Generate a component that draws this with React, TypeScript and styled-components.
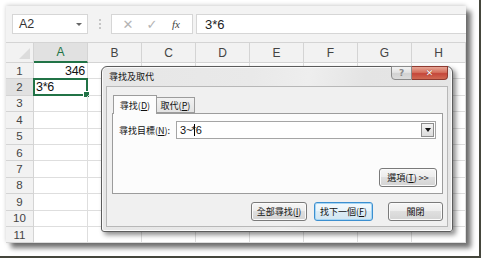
import React from "react";
import styled, { createGlobalStyle } from "styled-components";

const GlobalStyle = createGlobalStyle`
  body {
    margin: 0;
    background: #fff;
    font-family: "Liberation Sans", Arial, sans-serif;
  }
`;

const cjk = `"Noto Sans CJK TC", "Liberation Sans", sans-serif`;

const Page = styled.div`
  width: 484px;
  height: 260px;
  background: #fff;
  overflow: hidden;
`;

const Outer = styled.div`
  box-sizing: border-box;
  width: 481px;
  height: 258px;
  padding: 6px 0 0 6px;
  border-right: 2px solid #45463c;
  border-bottom: 2px solid #45463c;
`;

const Frame = styled.div`
  position: relative;
  width: 460px;
  height: 237px;
  background: #f3f3f3;
  box-shadow: 0 -1px 4px rgba(0, 0, 0, 0.18), 5px 5px 5px rgba(0, 0, 0, 0.55);
  overflow: visible;
`;

const FormulaBar = styled.div`
  display: flex;
  align-items: center;
  height: 36px;
  padding-left: 6px;
`;

const NameBox = styled.div`
  box-sizing: border-box;
  width: 76px;
  height: 20px;
  background: #fff;
  border: 1px solid #d6d6d6;
  display: flex;
  align-items: center;
  justify-content: space-between;
  padding: 0 5px 0 6px;
  font-size: 12.5px;
  color: #333;
`;

const SmallArrow = styled.span`
  width: 0;
  height: 0;
  border-left: 3px solid transparent;
  border-right: 3px solid transparent;
  border-top: 3px solid #666;
`;

const Dots = styled.div`
  width: 23px;
  display: flex;
  flex-direction: column;
  align-items: center;
  gap: 2px;
  span {
    width: 2px;
    height: 2px;
    background: #c6c6c6;
  }
`;

const FxBox = styled.div`
  box-sizing: border-box;
  width: 82px;
  height: 20px;
  margin-right: 3px;
  background: #fff;
  border: 1px solid #d6d6d6;
  display: flex;
  align-items: center;
  justify-content: space-around;
  padding: 0 4px;
`;

const FxIcon = styled.span<{ $dark?: boolean }>`
  width: 22px;
  text-align: center;
  font-size: ${(p) => (p.$dark ? "11px" : "13px")};
  font-family: ${(p) => (p.$dark ? `"Liberation Serif", serif` : `"DejaVu Sans", sans-serif`)};
  font-style: ${(p) => (p.$dark ? "italic" : "normal")};
  color: ${(p) => (p.$dark ? "#444" : "#b4b4b4")};
`;

const FormulaInput = styled.div`
  flex: 1;
  height: 20px;
  box-sizing: border-box;
  background: #fff;
  border: 1px solid #d6d6d6;
  border-right: none;
  display: flex;
  align-items: center;
  padding-left: 8px;
  font-size: 13px;
  color: #222;
`;

const Sheet = styled.div`
  display: grid;
  grid-template-columns: 28px repeat(8, 54px);
  grid-template-rows: 20px repeat(11, 16.4px);
  background: #fff;
  border-top: 1px solid #d4d4d4;
`;

const Corner = styled.div`
  position: relative;
  background: #f2f2f2;
  border-right: 1px solid #d4d4d4;
  border-bottom: 1px solid #d4d4d4;
  &::after {
    content: "";
    position: absolute;
    right: 3px;
    bottom: 3px;
    border-left: 11px solid transparent;
    border-bottom: 11px solid #dcdcdc;
  }
`;

const ColHead = styled.div<{ $active?: boolean }>`
  box-sizing: border-box;
  display: flex;
  align-items: center;
  justify-content: center;
  font-size: 12px;
  background: ${(p) => (p.$active ? "#e1e1e1" : "#f2f2f2")};
  color: ${(p) => (p.$active ? "#217346" : "#444")};
  border-right: 1px solid #d4d4d4;
  border-bottom: ${(p) => (p.$active ? "2px solid #217346" : "1px solid #d4d4d4")};
`;

const RowHead = styled.div<{ $active?: boolean }>`
  box-sizing: border-box;
  display: flex;
  align-items: center;
  justify-content: center;
  font-size: 11.5px;
  background: ${(p) => (p.$active ? "#e1e1e1" : "#f2f2f2")};
  color: #444;
  border-right: 1px solid #d4d4d4;
  border-bottom: 1px solid #d4d4d4;
`;

const Cell = styled.div<{ $right?: boolean; $selected?: boolean }>`
  position: relative;
  box-sizing: border-box;
  display: flex;
  align-items: center;
  justify-content: ${(p) => (p.$right ? "flex-end" : "flex-start")};
  padding: 0 2px;
  font-size: 12.5px;
  letter-spacing: -0.3px;
  color: #111;
  border-right: 1px solid #dedede;
  border-bottom: 1px solid #dedede;
  ${(p) =>
    p.$selected &&
    `
    &::before {
      content: "";
      position: absolute;
      left: -1px;
      top: -1px;
      right: -1px;
      bottom: -1px;
      border: 2px solid #217346;
    }
    &::after {
      content: "";
      position: absolute;
      right: -3px;
      bottom: -3px;
      width: 5px;
      height: 5px;
      background: #217346;
      border: 1px solid #fff;
    }
  `}
`;

/* ---------- dialog ---------- */

const Dialog = styled.div`
  position: absolute;
  left: 95px;
  top: 60px;
  box-sizing: border-box;
  width: 352px;
  height: 166px;
  padding: 0 4px 4px 4px;
  border: 1px solid #5c5c5c;
  border-radius: 6px 6px 3px 3px;
  background: linear-gradient(100deg, #e6e6e6 0%, #e9e9e9 40%, #eeeeee 55%, #e4e4e4 70%, #e6e6e6 100%);
  box-shadow: inset 0 0 0 1px #fafafa, 3px 3px 5px rgba(0, 0, 0, 0.45);
  font-family: ${cjk};
`;

const TitleBar = styled.div`
  display: flex;
  justify-content: space-between;
  height: 19px;
`;

const Title = styled.span`
  font-size: 9px;
  color: #111;
  line-height: 19px;
  padding-left: 3px;
`;

const Caption = styled.div`
  display: flex;
  align-self: flex-start;
  margin-top: -1px;
`;

const CapBtn = styled.div<{ $close?: boolean }>`
  box-sizing: border-box;
  width: ${(p) => (p.$close ? "36px" : "21px")};
  height: 14px;
  display: flex;
  align-items: center;
  justify-content: center;
  font-family: "DejaVu Sans", sans-serif;
  font-size: 9px;
  font-weight: bold;
  color: ${(p) => (p.$close ? "#fff" : "#8a8a8a")};
  border: 1px solid ${(p) => (p.$close ? "#8d3a30" : "#8b8b8b")};
  border-left: ${(p) => (p.$close ? "none" : "1px solid #8b8b8b")};
  border-radius: ${(p) => (p.$close ? "0 0 4px 0" : "0 0 0 4px")};
  background: ${(p) =>
    p.$close
      ? "linear-gradient(#e8a797, #d5705d 45%, #c5473a 55%, #d06a53)"
      : "linear-gradient(#f4f4f4, #e3e3e3 45%, #d2d2d2 55%, #dcdcdc)"};
  text-shadow: ${(p) => (p.$close ? "0 0 1px #6b1c10" : "none")};
`;

const Client = styled.div`
  box-sizing: border-box;
  height: 141px;
  padding: 8px 4px 0 5px;
  background: #f0f0f0;
  border: 1px solid #b8b8b8;
`;

const Tabs = styled.div`
  display: flex;
  align-items: flex-end;
  height: 18px;
  padding-left: 1px;
`;

const Tab = styled.div<{ $active?: boolean }>`
  box-sizing: border-box;
  height: ${(p) => (p.$active ? "19px" : "16px")};
  width: ${(p) => (p.$active ? "44px" : "38px")};
  margin-bottom: ${(p) => (p.$active ? "-1px" : "0")};
  display: flex;
  align-items: center;
  justify-content: center;
  font-size: 9px;
  color: #111;
  border: 1px solid #9c9c9c;
  border-bottom: ${(p) => (p.$active ? "none" : "1px solid #9c9c9c")};
  border-left: ${(p) => (p.$active ? "1px solid #9c9c9c" : "none")};
  background: ${(p) => (p.$active ? "#fcfcfc" : "linear-gradient(#f2f2f2, #e3e3e3)")};
  position: relative;
  z-index: ${(p) => (p.$active ? 1 : 0)};
`;

const Panel = styled.div`
  box-sizing: border-box;
  height: 81px;
  display: flex;
  flex-direction: column;
  padding: 7px 5px 6px 6px;
  background: #fcfcfc;
  border: 1px solid #9c9c9c;
`;

const FieldRow = styled.div`
  display: flex;
  align-items: center;
`;

const Label = styled.span`
  width: 57px;
  font-size: 9px;
  color: #111;
`;

const Combo = styled.div`
  box-sizing: border-box;
  width: 260px;
  height: 18px;
  display: flex;
  align-items: center;
  justify-content: space-between;
  padding-left: 3px;
  background: #fff;
  border: 1px solid #a5a5a5;
`;

const ComboText = styled.span`
  font-family: "Liberation Sans", Arial, sans-serif;
  font-size: 11px;
  color: #111;
  display: flex;
  align-items: center;
`;

const Caret = styled.span`
  display: inline-block;
  width: 1px;
  height: 12px;
  background: #000;
  margin: 0 -3px 0 1px;
`;

const DropBtn = styled.div`
  box-sizing: border-box;
  width: 13px;
  height: 14px;
  margin-right: 1px;
  display: flex;
  align-items: center;
  justify-content: center;
  border: 1px solid #8d8d8d;
  background: linear-gradient(#f3f3f3, #dcdcdc);
`;

const Arrow = styled.span`
  width: 0;
  height: 0;
  border-left: 3px solid transparent;
  border-right: 3px solid transparent;
  border-top: 4px solid #111;
`;

const PanelFoot = styled.div`
  margin-top: auto;
  display: flex;
  justify-content: flex-end;
`;

const Button = styled.div<{ $w: number; $focus?: boolean; $gap?: number }>`
  box-sizing: border-box;
  width: ${(p) => p.$w}px;
  height: 19px;
  margin-left: ${(p) => p.$gap ?? 0}px;
  display: flex;
  align-items: center;
  justify-content: center;
  font-size: 9px;
  color: #111;
  border: 1px solid ${(p) => (p.$focus ? "#3c8fcf" : "#7a7a7a")};
  border-radius: 3px;
  background: ${(p) =>
    p.$focus
      ? "linear-gradient(#f4fafd, #e8f4fb 50%, #dcecf6 50%, #d2e6f2)"
      : "linear-gradient(#f6f6f6, #ececec 50%, #dfdfdf 50%, #d4d4d4)"};
  box-shadow: ${(p) => (p.$focus ? "inset 0 0 0 1px #a6d6f5" : "inset 0 0 0 1px #fbfbfb")};
`;

const ButtonRow = styled.div`
  display: flex;
  justify-content: flex-end;
  margin-top: 8px;
  padding-right: 0;
`;

const cols = ["A", "B", "C", "D", "E", "F", "G", "H"];
const rows = Array.from({ length: 11 }, (_, i) => i + 1);

const cellText: Record<string, { text: string; right?: boolean }> = {
  "1-0": { text: "346", right: true },
  "2-0": { text: "3*6" },
};

export default function App() {
  return (
    <Page>
      <GlobalStyle />
      <Outer>
        <Frame>
          <FormulaBar>
            <NameBox>
              A2
              <SmallArrow />
            </NameBox>
            <Dots>
              <span />
              <span />
              <span />
            </Dots>
            <FxBox>
              <FxIcon>✕</FxIcon>
              <FxIcon>✓</FxIcon>
              <FxIcon $dark>fx</FxIcon>
            </FxBox>
            <FormulaInput>3*6</FormulaInput>
          </FormulaBar>

          <Sheet>
            <Corner />
            {cols.map((c, i) => (
              <ColHead key={c} $active={i === 0}>
                {c}
              </ColHead>
            ))}
            {rows.map((r) => (
              <React.Fragment key={r}>
                <RowHead $active={r === 2}>{r}</RowHead>
                {cols.map((c, ci) => {
                  const v = cellText[`${r}-${ci}`];
                  return (
                    <Cell key={c} $right={v?.right} $selected={r === 2 && ci === 0}>
                      {v?.text}
                    </Cell>
                  );
                })}
              </React.Fragment>
            ))}
          </Sheet>

          <Dialog>
            <TitleBar>
              <Title>尋找及取代</Title>
              <Caption>
                <CapBtn>?</CapBtn>
                <CapBtn $close>✕</CapBtn>
              </Caption>
            </TitleBar>
            <Client>
              <Tabs>
                <Tab $active>
                  尋找(<u>D</u>)
                </Tab>
                <Tab>
                  取代(<u>P</u>)
                </Tab>
              </Tabs>
              <Panel>
                <FieldRow>
                  <Label>
                    尋找目標(<u>N</u>):
                  </Label>
                  <Combo>
                    <ComboText>
                      3~
                      <Caret />
                      *6
                    </ComboText>
                    <DropBtn>
                      <Arrow />
                    </DropBtn>
                  </Combo>
                </FieldRow>
                <PanelFoot>
                  <Button $w={58}>
                    選項(<u>T</u>) &gt;&gt;
                  </Button>
                </PanelFoot>
              </Panel>
              <ButtonRow>
                <Button $w={56}>
                  全部尋找(<u>I</u>)
                </Button>
                <Button $w={59} $gap={7} $focus>
                  找下一個(<u>F</u>)
                </Button>
                <Button $w={55} $gap={15}>
                  關閉
                </Button>
              </ButtonRow>
            </Client>
          </Dialog>
        </Frame>
      </Outer>
    </Page>
  );
}
